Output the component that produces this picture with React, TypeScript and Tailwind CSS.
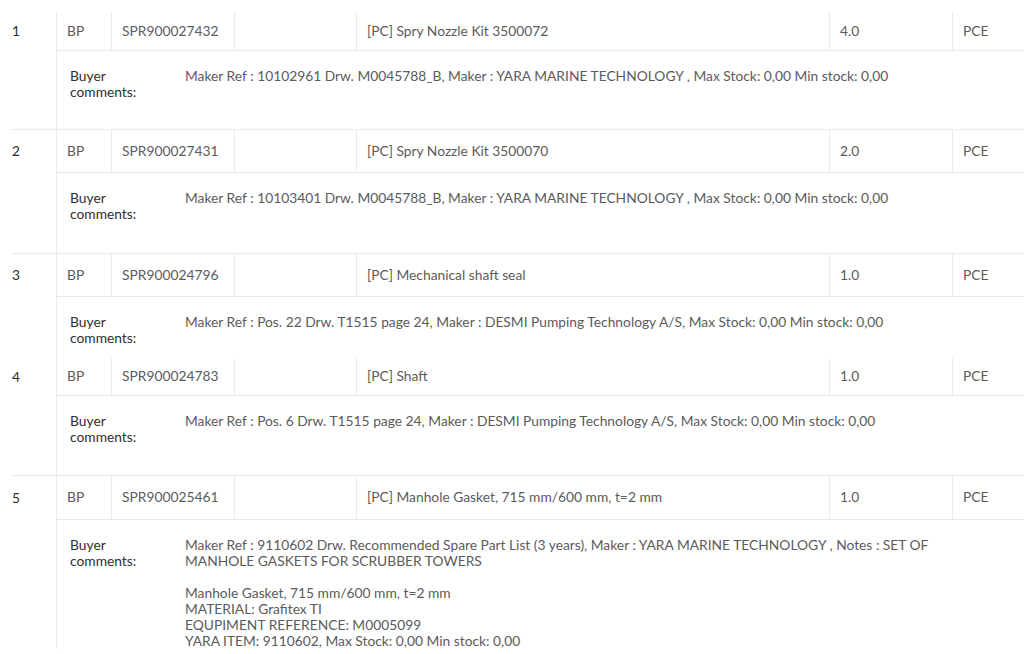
type Line = {
  no: number;
  code: string;
  part: string;
  desc: string;
  qty: string;
  unit: string;
  comments: string[];
  headH: string;
  bodyH: string;
  last?: boolean;
  noBottom?: boolean;
};

const lines: Line[] = [
  {
    no: 1,
    code: "BP",
    part: "SPR900027432",
    desc: "[PC] Spry Nozzle Kit 3500072",
    qty: "4.0",
    unit: "PCE",
    comments: [
      "Maker Ref : 10102961 Drw. M0045788_B, Maker : YARA MARINE TECHNOLOGY , Max Stock: 0,00 Min stock: 0,00",
    ],
    headH: "h-[39px]",
    bodyH: "h-[78px]",
  },
  {
    no: 2,
    code: "BP",
    part: "SPR900027431",
    desc: "[PC] Spry Nozzle Kit 3500070",
    qty: "2.0",
    unit: "PCE",
    comments: [
      "Maker Ref : 10103401 Drw. M0045788_B, Maker : YARA MARINE TECHNOLOGY , Max Stock: 0,00 Min stock: 0,00",
    ],
    headH: "h-[43px]",
    bodyH: "h-[80px]",
  },
  {
    no: 3,
    code: "BP",
    part: "SPR900024796",
    desc: "[PC] Mechanical shaft seal",
    qty: "1.0",
    unit: "PCE",
    comments: [
      "Maker Ref : Pos. 22 Drw. T1515 page 24, Maker : DESMI Pumping Technology A/S, Max Stock: 0,00 Min stock: 0,00",
    ],
    headH: "h-[43px]",
    bodyH: "h-[61px]",
    noBottom: true,
  },
  {
    no: 4,
    code: "BP",
    part: "SPR900024783",
    desc: "[PC] Shaft",
    qty: "1.0",
    unit: "PCE",
    comments: [
      "Maker Ref : Pos. 6 Drw. T1515 page 24, Maker : DESMI Pumping Technology A/S, Max Stock: 0,00 Min stock: 0,00",
    ],
    headH: "h-[38px]",
    bodyH: "h-[79px]",
  },
  {
    no: 5,
    code: "BP",
    part: "SPR900025461",
    desc: "[PC] Manhole Gasket, 715 mm/600 mm, t=2 mm",
    qty: "1.0",
    unit: "PCE",
    comments: [
      "Maker Ref : 9110602 Drw. Recommended Spare Part List (3 years), Maker : YARA MARINE TECHNOLOGY , Notes : SET OF MANHOLE GASKETS FOR SCRUBBER TOWERS",
      "",
      "Manhole Gasket, 715 mm/600 mm, t=2 mm",
      "MATERIAL: Grafitex TI",
      "EQUPIMENT REFERENCE: M0005099",
      "YARA ITEM: 9110602, Max Stock: 0,00 Min stock: 0,00",
    ],
    headH: "h-[44px]",
    bodyH: "",
    last: true,
  },
];

function Cell({ w, children }: { w: string; children?: React.ReactNode }) {
  return (
    <div className={`${w} flex h-full items-center border-r border-[#e8eaee] px-[10px]`}>
      {children}
    </div>
  );
}

function LineRow({ line }: { line: Line }) {
  return (
    <div
      className={`flex ${line.last || line.noBottom ? "" : "border-b border-[#e8eaee]"}`}
    >
      <div className={`w-[44px] ${line.headH} flex items-center text-[#2f2f2f]`}>
        {line.no}
      </div>
      <div className="flex-1 border-l border-[#e8eaee]">
        <div className={`flex ${line.headH} border-b border-[#e8eaee] text-[#5b5b5b]`}>
          <Cell w="w-[55px]">{line.code}</Cell>
          <Cell w="w-[123px]">{line.part}</Cell>
          <Cell w="w-[122px]" />
          <Cell w="w-[473px]">{line.desc}</Cell>
          <Cell w="w-[123px]">{line.qty}</Cell>
          <div className="flex flex-1 items-center px-[10px]">{line.unit}</div>
        </div>
        <div className={`flex ${line.bodyH} pt-[17px] pl-[13px] leading-4`}>
          <div className="w-[115px] text-[#2f2f2f]">
            Buyer
            <br />
            comments:
          </div>
          <div className="w-[770px] text-[#5b5b5b]">
            {line.comments.map((c, i) => (
              <div key={i} className="min-h-4">
                {c}
              </div>
            ))}
          </div>
        </div>
      </div>
    </div>
  );
}

export default function App() {
  return (
    <div
      className="h-[654px] w-[1024px] overflow-hidden bg-white pt-3 pl-3 text-[13.8px]"
      style={{ fontFamily: "Lato, 'Open Sans', sans-serif" }}
    >
      {lines.map((l) => (
        <LineRow key={l.no} line={l} />
      ))}
    </div>
  );
}
